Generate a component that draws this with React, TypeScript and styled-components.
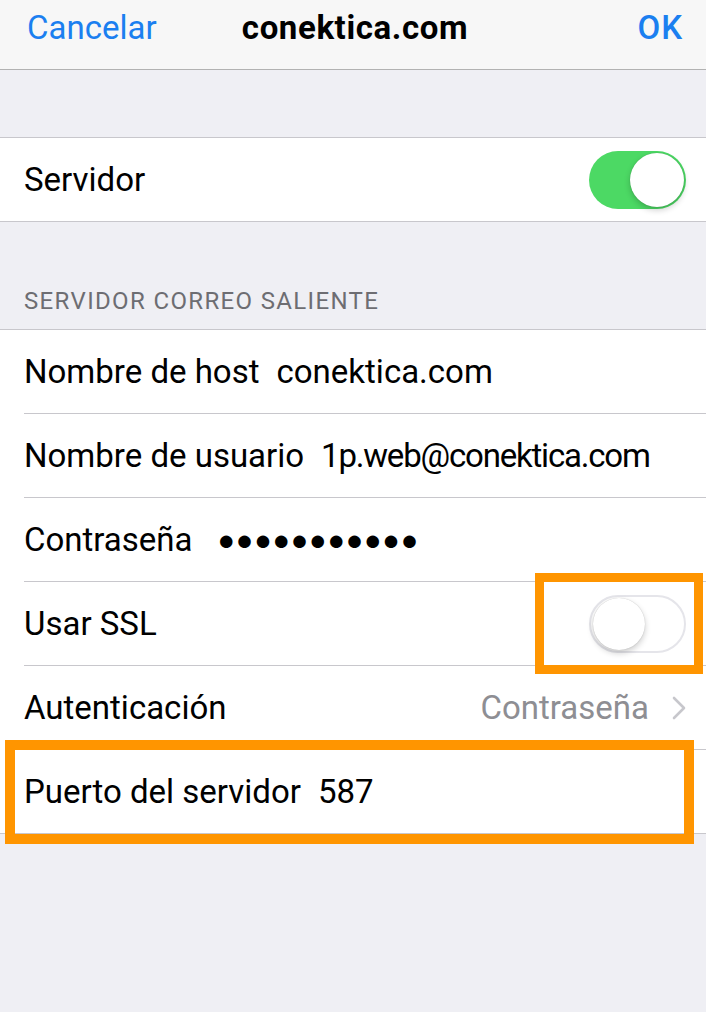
import styled, { createGlobalStyle } from "styled-components";

const GlobalStyle = createGlobalStyle`
  html, body {
    margin: 0;
    padding: 0;
    background: #efeff4;
  }
  body {
    font-family: Roboto, "Liberation Sans", Arial, sans-serif;
    -webkit-font-smoothing: antialiased;
  }
`;

type ToggleProps = { $on?: boolean };

function App() {
  return (
    <>
      <GlobalStyle />
      <Screen>
        <NavBar>
          <NavButton $align="left">Cancelar</NavButton>
          <NavTitle>conektica.com</NavTitle>
          <NavButton $align="right">OK</NavButton>
        </NavBar>

        <Group $top={67}>
          <Row>
            <RowInner $last>
              <Label>Servidor</Label>
              <Toggle $on>
                <Knob $on />
              </Toggle>
            </RowInner>
          </Row>
        </Group>

        <SectionHeader>SERVIDOR CORREO SALIENTE</SectionHeader>
        <Group>
          <Row>
            <RowInner>
              <Label>Nombre de host</Label>
              <Value>conektica.com</Value>
            </RowInner>
          </Row>
          <Row>
            <RowInner>
              <Label>Nombre de usuario</Label>
              <Value $tight>1p.web@conektica.com</Value>
            </RowInner>
          </Row>
          <Row>
            <RowInner>
              <Label>Contraseña</Label>
              <Dots>●●●●●●●●●●●</Dots>
            </RowInner>
          </Row>
          <Row>
            <RowInner>
              <Label>Usar SSL</Label>
              <Toggle>
                <Knob />
              </Toggle>
            </RowInner>
            <SwitchMark />
          </Row>
          <Row>
            <RowInner>
              <Label>Autenticación</Label>
              <Detail>Contraseña</Detail>
              <Chevron viewBox="0 0 14 24">
                <path d="M2 2 L12 12 L2 22" fill="none" stroke="#c7c7cc" strokeWidth="2.6" strokeLinecap="round" strokeLinejoin="round" />
              </Chevron>
            </RowInner>
          </Row>
          <Row>
            <RowInner $last>
              <Label>Puerto del servidor</Label>
              <Value>587</Value>
            </RowInner>
            <RowMark />
          </Row>
        </Group>
      </Screen>
    </>
  );
}

const Screen = styled.div`
  width: 706px;
  min-height: 1012px;
  background: #efeff4;
  overflow: hidden;
`;

const NavBar = styled.div`
  height: 70px;
  box-sizing: border-box;
  display: grid;
  grid-template-columns: 1fr auto 1fr;
  align-items: center;
  padding: 0 23px 14px 27px;
  background: #f7f7f7;
  border-bottom: 1px solid #b2b2b2;
`;

const NavButton = styled.div<{ $align: "left" | "right" }>`
  font-size: 33px;
  color: #1b7ff0;
  text-align: ${(p) => p.$align};
  font-weight: ${(p) => (p.$align === "right" ? 500 : 400)};
  letter-spacing: ${(p) => (p.$align === "right" ? "1px" : "0")};
`;

const NavTitle = styled.div`
  font-size: 33px;
  font-weight: 700;
  letter-spacing: 0.6px;
  color: #000;
`;

const Group = styled.div<{ $top?: number }>`
  margin-top: ${(p) => p.$top ?? 0}px;
  background: #fff;
  border-top: 1px solid #c8c7cc;
  border-bottom: 1px solid #c8c7cc;
`;

const SectionHeader = styled.div`
  height: 107px;
  box-sizing: border-box;
  padding: 0 24px 14px;
  display: flex;
  align-items: flex-end;
  font-size: 24px;
  color: #6d6d72;
  letter-spacing: 1.35px;
`;

const Row = styled.div`
  position: relative;
  padding-left: 24px;
`;

const RowInner = styled.div<{ $last?: boolean }>`
  height: 83px;
  display: flex;
  align-items: center;
  gap: 17px;
  padding-right: 20px;
  border-bottom: ${(p) => (p.$last ? "none" : "1px solid #c8c7cc")};
`;

const Label = styled.span`
  font-size: 33px;
  color: #000;
  white-space: nowrap;
`;

const Value = styled.span<{ $tight?: boolean }>`
  font-size: 33px;
  color: #000;
  white-space: nowrap;
  letter-spacing: ${(p) => (p.$tight ? "-1.2px" : "0")};
`;

const Dots = styled.span`
  font-size: 29px;
  letter-spacing: 0.8px;
  color: #000;
  margin-left: 8px;
`;

const Detail = styled.span`
  margin-left: auto;
  font-size: 33px;
  color: #8e8e93;
`;

const Chevron = styled.svg`
  width: 14px;
  height: 24px;
  margin-left: 6px;
`;

const Toggle = styled.div<ToggleProps>`
  margin-left: auto;
  width: 97px;
  height: 58px;
  box-sizing: border-box;
  border-radius: 29px;
  display: flex;
  align-items: center;
  justify-content: ${(p) => (p.$on ? "flex-end" : "flex-start")};
  padding: 2px;
  background: ${(p) => (p.$on ? "#4cd964" : "#fff")};
  border: ${(p) => (p.$on ? "none" : "2px solid #e5e5ea")};
`;

const Knob = styled.div<ToggleProps>`
  width: ${(p) => (p.$on ? 54 : 52)}px;
  height: ${(p) => (p.$on ? 54 : 52)}px;
  border-radius: 50%;
  background: #fff;
  box-shadow: 0 3px 6px rgba(0, 0, 0, 0.2), 0 0 1px rgba(0, 0, 0, 0.25);
`;

const SwitchMark = styled.div`
  position: absolute;
  top: -9px;
  left: 535px;
  width: 168px;
  height: 101px;
  box-sizing: border-box;
  border: 9px solid #ff9500;
  pointer-events: none;
`;

const RowMark = styled.div`
  position: absolute;
  top: -10px;
  left: 5px;
  width: 689px;
  height: 104px;
  box-sizing: border-box;
  border: 10px solid #ff9500;
  pointer-events: none;
`;

export default App;
